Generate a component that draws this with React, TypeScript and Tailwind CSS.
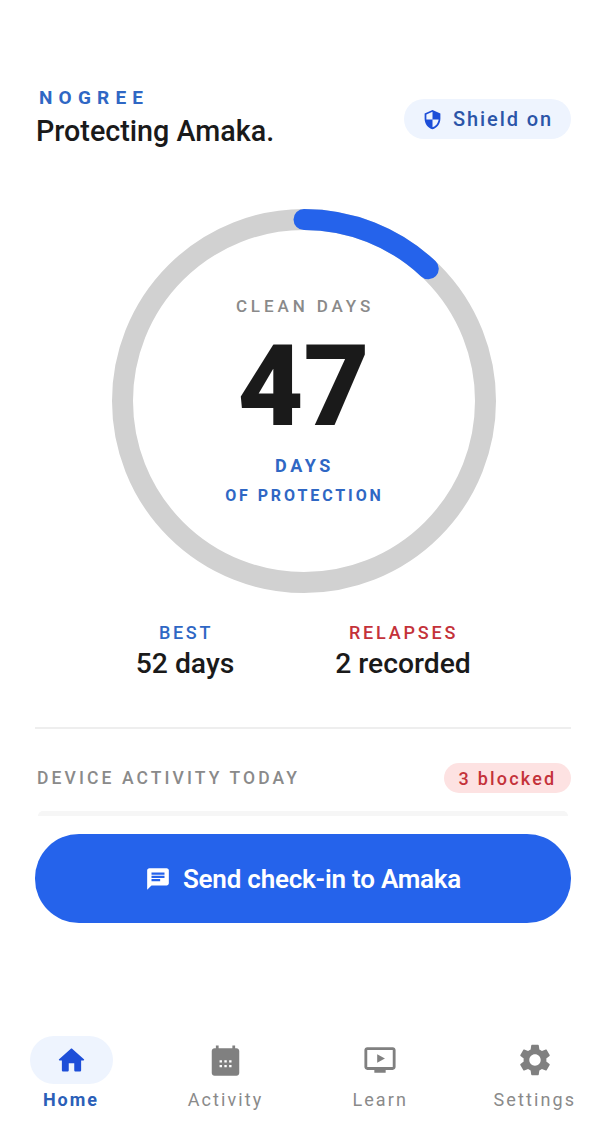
import React from "react";

const R = 181.5;
const C = 2 * Math.PI * R;

function Ring() {
  return (
    <svg viewBox="0 0 384 384" className="absolute inset-0 w-[384px] h-[384px]">
      <circle cx="192" cy="192" r={R} fill="none" stroke="#d1d1d1" strokeWidth="21" />
      <circle
        cx="192"
        cy="192"
        r={R}
        fill="none"
        stroke="#2563eb"
        strokeWidth="21"
        strokeLinecap="round"
        strokeDasharray={`${C * 0.12} ${C}`}
        transform="rotate(-90 192 192)"
      />
    </svg>
  );
}

function Tab({ label, active, children }: { label: string; active?: boolean; children: React.ReactNode }) {
  return (
    <div className="flex flex-col items-center w-[100px]">
      <div className={`w-[83px] h-[48px] rounded-full flex items-center justify-center ${active ? "bg-[#eef4fe]" : ""}`}>
        {children}
      </div>
      <div className={`mt-[4px] text-[18px] leading-[24px] whitespace-nowrap ${active ? "font-bold tracking-[2px] text-[#2b5fb8]" : "tracking-[2.1px] text-[#8a8a8a]"}`}>
        {label}
      </div>
    </div>
  );
}

export default function App() {
  return (
    <div className="w-[606px] h-[1126px] bg-white flex flex-col font-['Roboto',sans-serif] overflow-hidden">
      <header className="flex items-start justify-between pl-[36px] pr-[35px] pt-[86px]">
        <div>
          <div className="pl-[3px] text-[19px] leading-[24px] font-bold tracking-[6.2px] text-[#2f67c4]">NOGREE</div>
          <div className="text-[28.7px] leading-[36px] font-medium text-[#1a1a1a] mt-[3px]">Protecting Amaka.</div>
        </div>
        <div className="mt-[13px] h-[40px] w-[167px] rounded-full bg-[#eef4fe] flex items-center justify-center gap-[10px] text-[#2b55a8]">
          <svg viewBox="0 0 24 24" className="w-[21px] h-[21px]" fill="#1d4ed8">
            <path d="M12 1 3 5v6c0 5.55 3.84 10.74 9 12 5.16-1.26 9-6.45 9-12V5l-9-4zm0 10.99h7c-.53 4.12-3.28 7.79-7 8.94V12H5V6.3l7-3.11v8.8z" />
          </svg>
          <span className="text-[20px] leading-[24px] font-medium tracking-[1.9px]">Shield on</span>
        </div>
      </header>

      <div className="relative mt-[60px] ml-[111.5px] w-[384px] h-[384px] shrink-0">
        <Ring />
        <div className="absolute inset-0 flex flex-col items-center">
          <div className="mt-[86px] pl-[3px] text-[17px] leading-[22px] font-medium tracking-[3.9px] text-[#8a8a8a]">CLEAN DAYS</div>
          <div className="mt-[9px] text-[114px] leading-[120px] font-black text-[#1a1a1a]">47</div>
          <div className="mt-[9px] pl-[2px] text-[18px] leading-[22px] font-bold tracking-[3.6px] text-[#2f67c4]">DAYS</div>
          <div className="mt-[8px] pl-[2px] text-[16px] leading-[22px] font-bold tracking-[2.9px] text-[#2f67c4]">OF PROTECTION</div>
        </div>
      </div>

      <div className="mt-[29px] flex">
        <div className="ml-[135px] w-[100px] text-center">
          <div className="pl-[2px] text-[18px] leading-[22px] font-medium tracking-[2.7px] text-[#2f67c4]">BEST</div>
          <div className="mt-[3px] text-[28.3px] leading-[34px] font-medium text-[#1a1a1a] whitespace-nowrap">52 days</div>
        </div>
        <div className="ml-[100px] w-[136px] text-center">
          <div className="pl-[1px] text-[18px] leading-[22px] font-medium tracking-[2.8px] text-[#c4323a]">RELAPSES</div>
          <div className="mt-[3px] text-[28.3px] leading-[34px] font-medium text-[#1a1a1a] whitespace-nowrap">2 recorded</div>
        </div>
      </div>

      <div className="mt-[46px] mx-[35px] h-[2px] bg-[#eeeeee]" />

      <div className="mt-[34px] mx-[35px] flex items-center justify-between">
        <div className="pl-[2px] text-[17.5px] leading-[22px] font-medium tracking-[3.1px] text-[#8a8a8a]">DEVICE ACTIVITY TODAY</div>
        <div className="w-[127px] h-[30px] rounded-full bg-[#fde2e2] flex items-center justify-center text-[18px] font-medium tracking-[2.2px] text-[#c4323a]">3 blocked</div>
      </div>

      <div className="mt-[18px] mx-[38px] h-[5px] rounded-t-[16px] bg-[#f6f6f6]" />

      <div className="mt-[18px] mx-[35px] h-[89px] rounded-[44px] bg-[#2563eb] flex items-center justify-center gap-[12px] text-white">
        <svg viewBox="0 0 24 24" className="w-[26px] h-[26px]" fill="currentColor">
          <path d="M20 2H4c-1.1 0-2 .9-2 2v18l4-4h14c1.1 0 2-.9 2-2V4c0-1.1-.9-2-2-2zM6 9h12v2H6V9zm8 5H6v-2h8v2zm4-6H6V6h12v2z" />
        </svg>
        <span className="text-[26px] leading-[32px] font-semibold tracking-[-0.22px]">Send check-in to Amaka</span>
      </div>

      <nav className="mt-[113px] flex gap-[54.6px] pl-[21px]">
        <Tab label="Home" active>
          <svg viewBox="0 0 24 24" className="w-[33px] h-[33px]" fill="#1d4ed8">
            <path d="M10 19v-5h4v5c0 .55.45 1 1 1h3c.55 0 1-.45 1-1v-7h1.7c.46 0 .68-.57.33-.87L12.67 3.6c-.38-.34-.96-.34-1.34 0l-8.36 7.53c-.34.3-.13.87.33.87H5v7c0 .55.45 1 1 1h3c.55 0 1-.45 1-1z" />
          </svg>
        </Tab>
        <Tab label="Activity">
          <svg viewBox="0 0 24 24" className="w-[33px] h-[33px]" fill="#808080">
            <path d="M5 3V1h2v2h10V1h2v2h1c1.1 0 2 .9 2 2v16c0 1.1-.9 2-2 2H4c-1.1 0-2-.9-2-2V5c0-1.1.9-2 2-2h1z" />
            <path d="M7 11h2v2H7zm4 0h2v2h-2zm4 0h2v2h-2zM7 15h2v2H7zm4 0h2v2h-2zm4 0h2v2h-2z" fill="#ffffff" transform="translate(1.6 2.2) scale(.87)" />
          </svg>
        </Tab>
        <Tab label="Learn">
          <svg viewBox="0 0 24 24" className="w-[34px] h-[34px]" fill="#808080">
            <path d="M3 3h18c1.1 0 2 .9 2 2v12c0 1.1-.9 2-2 2h-5v2H8v-2H3c-1.1 0-2-.9-2-2V5c0-1.1.9-2 2-2zm0 2v12h18V5H3z" fillRule="evenodd" />
            <path d="M10 8l5.5 3-5.5 3z" />
          </svg>
        </Tab>
        <Tab label="Settings">
          <svg viewBox="0 0 24 24" className="w-[38px] h-[38px]" fill="#808080">
            <path d="M19.14 12.94c.04-.3.06-.61.06-.94 0-.32-.02-.64-.07-.94l2.03-1.58c.18-.14.23-.41.12-.61l-1.92-3.32c-.12-.22-.37-.29-.59-.22l-2.39.96c-.5-.38-1.03-.7-1.62-.94l-.36-2.54c-.04-.24-.24-.41-.48-.41h-3.84c-.24 0-.43.17-.47.41l-.36 2.54c-.59.24-1.13.57-1.62.94l-2.39-.96c-.22-.08-.47 0-.59.22L2.74 8.87c-.12.21-.08.47.12.61l2.03 1.58c-.05.3-.09.63-.09.94s.02.64.07.94l-2.03 1.58c-.18.14-.23.41-.12.61l1.92 3.32c.12.22.37.29.59.22l2.39-.96c.5.38 1.03.7 1.62.94l.36 2.54c.05.24.24.41.48.41h3.84c.24 0 .44-.17.47-.41l.36-2.54c.59-.24 1.13-.56 1.62-.94l2.39.96c.22.08.47 0 .59-.22l1.92-3.32c.12-.22.07-.47-.12-.61l-2.01-1.58zM12 15.6c-1.98 0-3.6-1.62-3.6-3.6s1.62-3.6 3.6-3.6 3.6 1.62 3.6 3.6-1.62 3.6-3.6 3.6z" />
          </svg>
        </Tab>
      </nav>
    </div>
  );
}
